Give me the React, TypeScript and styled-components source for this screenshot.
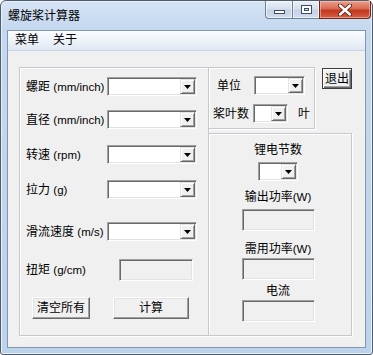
import styled, { createGlobalStyle } from 'styled-components'

const Global = createGlobalStyle`
  body {
    margin: 0;
    background: #ffffff;
  }
  * {
    box-sizing: border-box;
  }
`

const font = `"Liberation Sans", "Noto Sans CJK SC", sans-serif`

const Window = styled.div`
  width: 373px;
  height: 355px;
  display: flex;
  flex-direction: column;
  border: 1px solid #4f5c6d;
  border-radius: 6px 6px 3px 3px;
  background: linear-gradient(180deg, #d6e4f5 0%, #c4d8ef 28px, #bdd2eb 100%);
  box-shadow: inset 0 0 0 1px #e8f0fa;
  font-family: ${font};
  font-size: 12px;
  color: #000;
`

const TitleBar = styled.div`
  height: 29px;
  display: flex;
  align-items: flex-start;
  flex-shrink: 0;
`

const Title = styled.div`
  margin: 8px 0 0 7px;
  line-height: 14px;
  font-size: 12px;
`

const CaptionButtons = styled.div`
  margin-left: auto;
  margin-right: 1px;
  display: flex;
`

const CaptionButton = styled.div<{ $w: number; $close?: boolean; $first?: boolean; $last?: boolean }>`
  width: ${({ $w }) => $w}px;
  height: 18px;
  display: flex;
  align-items: center;
  justify-content: center;
  border: 1px solid ${({ $close }) => ($close ? '#6b2a1c' : '#6f7f96')};
  border-top: none;
  margin-left: ${({ $first }) => ($first ? 0 : -1)}px;
  border-radius: ${({ $first, $last }) =>
    $first ? '0 0 0 4px' : $last ? '0 0 4px 0' : '0'};
  background: ${({ $close }) =>
    $close
      ? 'linear-gradient(180deg, #eaa08c 0%, #d86a50 45%, #c23820 55%, #d65e42 100%)'
      : 'linear-gradient(180deg, #e9eff7 0%, #d6e1ee 45%, #c3d2e5 55%, #cfdcec 100%)'};
  box-shadow: inset 0 0 0 1px
    ${({ $close }) => ($close ? 'rgba(255,210,200,0.5)' : 'rgba(255,255,255,0.6)')};
`

const MinGlyph = styled.div`
  width: 11px;
  height: 4px;
  margin-top: 5px;
  background: #fff;
  border: 1px solid #3f4d62;
`

const MaxGlyph = styled.div`
  width: 11px;
  height: 9px;
  border: 1px solid #3f4d62;
  box-shadow: inset 0 0 0 2px #fff, inset 0 0 0 3px #3f4d62;
  background: #d6e1ee;
`

const Client = styled.div`
  flex: 1;
  margin: 0 6px 6px 6px;
  border: 1px solid #8496ae;
  background: #f0f0f0;
  display: flex;
  flex-direction: column;
`

const MenuBar = styled.div`
  height: 20px;
  display: flex;
  align-items: center;
  background: linear-gradient(180deg, #fbfcfe 0%, #eef3f9 50%, #dfe8f3 100%);
  border-bottom: 1px solid #c7d3e2;
`

const MenuItem = styled.div`
  padding: 0 7px;
  line-height: 19px;
`

const Body = styled.div`
  padding: 16px 0 0 11px;
  display: grid;
  grid-template-columns: 190px 106px 37px;
  grid-template-rows: 62px 203px;
  row-gap: 4px;
`

const Group = styled.div<{ $col: string; $row: string; $joined?: boolean }>`
  grid-column: ${({ $col }) => $col};
  grid-row: ${({ $row }) => $row};
  margin-left: ${({ $joined }) => ($joined ? -1 : 0)}px;
  border: 1px solid #c5c9cd;
  box-shadow: inset 1px 1px 0 #ffffff, 1px 1px 0 #ffffff;
  display: flex;
  flex-direction: column;
`

const LeftGroup = styled(Group)`
  padding: 9px 0 0 6px;
`

const Row = styled.div<{ $mt?: number; $pl?: number }>`
  display: flex;
  align-items: center;
  margin-top: ${({ $mt }) => $mt ?? 0}px;
  padding-left: ${({ $pl }) => $pl ?? 0}px;
`

const Label = styled.div<{ $w?: number }>`
  width: ${({ $w }) => ($w ? `${$w}px` : 'auto')};
  flex-shrink: 0;
  line-height: 14px;
  white-space: nowrap;
`

const Unit = styled.span`
  font-size: 11.5px;
`

const ComboBox = styled.div<{ $w: number }>`
  width: ${({ $w }) => $w}px;
  height: 19px;
  background: #ffffff;
  border: 1px solid;
  border-color: #a0a0a0 #ffffff #ffffff #a0a0a0;
  box-shadow: inset 1px 1px 0 #696969, inset -1px -1px 0 #e3e3e3;
  display: flex;
  justify-content: flex-end;
  padding: 1px;
`

const DropButton = styled.div`
  width: 15px;
  height: 15px;
  background: #f0f0f0;
  border: 1px solid;
  border-color: #e3e3e3 #696969 #696969 #e3e3e3;
  box-shadow: inset 1px 1px 0 #ffffff, inset -1px -1px 0 #a0a0a0;
  display: flex;
  align-items: center;
  justify-content: center;
`

const Combo = ({ w }: { w: number }) => (
  <ComboBox $w={w}>
    <DropButton>
      <svg width="7" height="4" viewBox="0 0 7 4">
        <polygon points="0,0 7,0 3.5,4" fill="#000" />
      </svg>
    </DropButton>
  </ComboBox>
)

const TextBox = styled.div<{ $w: number }>`
  width: ${({ $w }) => $w}px;
  height: 22px;
  background: #f0f0f0;
  border: 1px solid;
  border-color: #a0a0a0 #ffffff #ffffff #a0a0a0;
  box-shadow: inset 1px 1px 0 #696969, inset -1px -1px 0 #e3e3e3;
`

const Button = styled.div<{ $w: number; $h?: number; $default?: boolean }>`
  width: ${({ $w }) => $w}px;
  height: ${({ $h }) => $h ?? 22}px;
  flex-shrink: 0;
  display: flex;
  align-items: center;
  justify-content: center;
  background: #f0f0f0;
  border: 1px solid;
  border-color: ${({ $default }) =>
    $default ? '#3c3c3c' : '#ffffff #696969 #696969 #ffffff'};
  box-shadow: ${({ $default }) =>
    $default
      ? 'inset 1px 1px 0 #ffffff, inset -1px -1px 0 #696969, inset -2px -2px 0 #a0a0a0'
      : 'inset -1px -1px 0 #a0a0a0, inset 1px 1px 0 #e3e3e3'};
  font-size: 12px;
  line-height: 14px;
`

const ExitCell = styled.div`
  grid-column: 3;
  grid-row: 1;
  padding: 1px 0 0 7px;
`

const TopRightGroup = styled(Group)`
  padding-top: 8px;
`

const CenterGroup = styled(Group)`
  align-items: center;
  padding: 9px 4px 0 0;
`

const Stack = styled.div<{ $mt: number }>`
  margin-top: ${({ $mt }) => $mt}px;
  line-height: 14px;
`

const Ye = styled.div`
  margin-left: 10px;
  line-height: 14px;
`

export default function App() {
  return (
    <>
      <Global />
      <Window>
        <TitleBar>
          <Title>螺旋桨计算器</Title>
          <CaptionButtons>
            <CaptionButton $w={28} $first>
              <MinGlyph />
            </CaptionButton>
            <CaptionButton $w={28}>
              <MaxGlyph />
            </CaptionButton>
            <CaptionButton $w={52} $close $last>
              <svg width="14" height="12" viewBox="0 0 14 12">
                <path d="M2 1.5 L12 10.5 M12 1.5 L2 10.5" stroke="#5a1c10" strokeWidth="4.2" strokeLinecap="round" />
                <path d="M2 1.5 L12 10.5 M12 1.5 L2 10.5" stroke="#ffffff" strokeWidth="2.4" strokeLinecap="round" />
              </svg>
            </CaptionButton>
          </CaptionButtons>
        </TitleBar>
        <Client>
          <MenuBar>
            <MenuItem>菜单</MenuItem>
            <MenuItem>关于</MenuItem>
          </MenuBar>
          <Body>
            <LeftGroup $col="1" $row="1 / 3">
              <Row>
                <Label $w={81}>
                  螺距 <Unit>(mm/inch)</Unit>
                </Label>
                <Combo w={90} />
              </Row>
              <Row $mt={14}>
                <Label $w={81}>
                  直径 <Unit>(mm/inch)</Unit>
                </Label>
                <Combo w={90} />
              </Row>
              <Row $mt={16}>
                <Label $w={81}>
                  转速 <Unit>(rpm)</Unit>
                </Label>
                <Combo w={90} />
              </Row>
              <Row $mt={16}>
                <Label $w={81}>
                  拉力 <Unit>(g)</Unit>
                </Label>
                <Combo w={90} />
              </Row>
              <Row $mt={23}>
                <Label $w={81}>
                  滑流速度 <Unit>(m/s)</Unit>
                </Label>
                <Combo w={90} />
              </Row>
              <Row $mt={18}>
                <Label $w={93}>
                  扭矩 <Unit>(g/cm)</Unit>
                </Label>
                <TextBox $w={74} />
              </Row>
              <Row $mt={16} $pl={6}>
                <Button $w={58}>清空所有</Button>
                <Button $w={76} style={{ marginLeft: 23 }}>
                  计算
                </Button>
              </Row>
            </LeftGroup>

            <TopRightGroup $col="2" $row="1" $joined>
              <Row $pl={8}>
                <Label $w={37}>单位</Label>
                <Combo w={51} />
              </Row>
              <Row $mt={9} $pl={4}>
                <Label $w={40}>桨叶数</Label>
                <Combo w={35} />
                <Ye>叶</Ye>
              </Row>
            </TopRightGroup>

            <ExitCell>
              <Button $w={30} $h={21} $default>
                退出
              </Button>
            </ExitCell>

            <CenterGroup $col="2 / 4" $row="2" $joined>
              <Stack $mt={0}>锂电节数</Stack>
              <Stack $mt={5}>
                <Combo w={40} />
              </Stack>
              <Stack $mt={9}>
                输出功率<Unit>(W)</Unit>
              </Stack>
              <Stack $mt={5}>
                <TextBox $w={73} />
              </Stack>
              <Stack $mt={11}>
                需用功率<Unit>(W)</Unit>
              </Stack>
              <Stack $mt={2}>
                <TextBox $w={73} />
              </Stack>
              <Stack $mt={4}>电流</Stack>
              <Stack $mt={2}>
                <TextBox $w={73} />
              </Stack>
            </CenterGroup>
          </Body>
        </Client>
      </Window>
    </>
  )
}
